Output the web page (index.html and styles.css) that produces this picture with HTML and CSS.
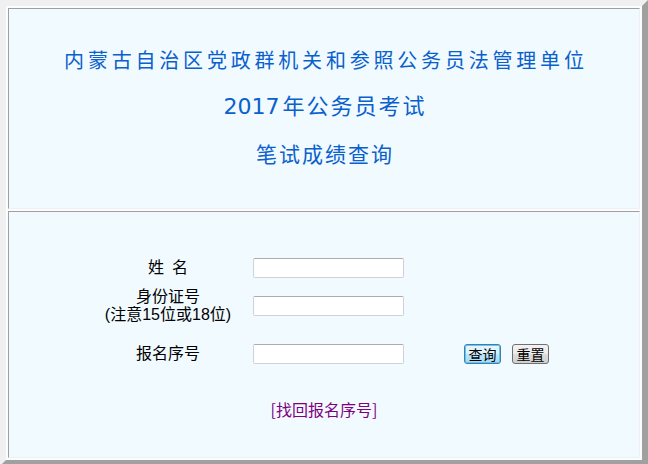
FILE: index.html
```html
<!DOCTYPE html>
<html lang="zh-CN">
<head>
<meta charset="utf-8">
<title>笔试成绩查询</title>
<link rel="stylesheet" href="styles.css">
</head>
<body>
<div class="frame">
  <div class="cell head">
    <div class="t1">内蒙古自治区党政群机关和参照公务员法管理单位</div>
    <div class="t2"><span class="num">2017</span>年公务员考试</div>
    <div class="t3">笔试成绩查询</div>
  </div>
  <div class="cell body">
    <form class="form">
      <div class="lbl"><span class="sp">姓</span>名</div>
      <div class="fld"><input class="inp" type="text"></div>
      <div class="btns"></div>

      <div class="lbl lbl2"><span class="ln">身份证号</span><span class="ln">(注意15位或18位)</span></div>
      <div class="fld"><input class="inp" type="text"></div>
      <div class="btns"></div>

      <div class="lbl">报名序号</div>
      <div class="fld"><input class="inp" type="text"></div>
      <div class="btns">
        <button type="button" class="btn primary">查询</button>
        <button type="reset" class="btn">重置</button>
      </div>
    </form>
    <div class="linkrow"><a class="link" href="#">[找回报名序号]</a></div>
  </div>
</div>
</body>
</html>
```

FILE: styles.css
```css
html, body {
  margin: 0;
  padding: 0;
  background: #f0f0f0;
}
body {
  font-family: "Noto Sans CJK SC", "Noto Sans", sans-serif;
  overflow: hidden;
}
.frame {
  box-sizing: border-box;
  width: 648px;
  height: 466px;
  border: 6px solid;
  border-color: #f0f0f0 #a0a0a0 #a0a0a0 #f0f0f0;
  background: #fafdff;
  padding: 2px;
  display: flex;
  flex-direction: column;
  gap: 2px;
}
.cell {
  box-sizing: border-box;
  border: 1px solid;
  border-color: #a0a0a0 #f0f0f0 #f0f0f0 #a0a0a0;
  background: #f0faff;
}
.head {
  height: 201px;
  text-align: center;
  color: #0a60cc;
}
.t1 {
  margin-top: 39px;
  font-size: 20px;
  line-height: 24px;
  letter-spacing: 3.8px;
  padding-left: 3.8px;
}
.t2 {
  margin-top: 18px;
  font-size: 22px;
  line-height: 28px;
  letter-spacing: 2px;
  padding-left: 2px;
}
.t2 .num {
  font-family: "DejaVu Sans", sans-serif;
  font-size: 22px;
  letter-spacing: 0;
  margin-right: 3px;
}
.t3 {
  margin-top: 19px;
  font-size: 21px;
  line-height: 26px;
  letter-spacing: 2px;
  padding-left: 2px;
}
.body {
  height: 247px;
  display: flex;
  flex-direction: column;
}
.form {
  margin: 41px 0 0 84px;
  display: grid;
  grid-template-columns: 150px 151px auto;
  grid-template-rows: 30px 46px 50px;
  column-gap: 10px;
  align-items: center;
}
.lbl {
  text-align: center;
  font-family: "Liberation Sans", "Noto Sans CJK SC", sans-serif;
  font-size: 16px;
  line-height: 18px;
  color: #000;
}
.lbl2 {
  display: flex;
  flex-direction: column;
  align-items: center;
}
.lbl .sp {
  margin-right: 8px;
}
.fld {
  display: flex;
  align-items: center;
}
.inp {
  box-sizing: border-box;
  width: 151px;
  height: 20px;
  margin: 0;
  border: 1px solid #cfd3d8;
  border-top-color: #a9acb0;
  border-radius: 2px;
  background: #fff;
}
.btns {
  display: flex;
  gap: 11px;
  padding-left: 50px;
}
.btn {
  box-sizing: border-box;
  width: 37px;
  height: 20px;
  padding: 0;
  margin: 0;
  font-family: "Noto Sans CJK SC", sans-serif;
  font-size: 14px;
  line-height: 16px;
  color: #000;
  border: 1px solid #707070;
  border-radius: 3px;
  background: linear-gradient(#f2f2f2, #ebebeb 50%, #dddddd 50%, #cfcfcf);
}
.btn.primary {
  border: 1px solid #3c7fb1;
  box-shadow: inset 0 0 0 1px #62c5f0;
  background: linear-gradient(#eaf6fd, #d9f0fc 50%, #bee6fd 50%, #a7d9f5);
}
.linkrow {
  margin-top: 21px;
  text-align: center;
  line-height: 18px;
  font-size: 16px;
}
.link {
  color: #800080;
  text-decoration: none;
}
```
